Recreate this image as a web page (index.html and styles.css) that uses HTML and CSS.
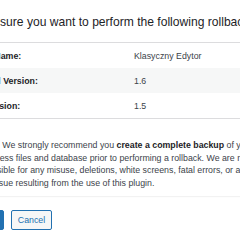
FILE: index.html
```html
<!DOCTYPE html>
<html lang="en">
<head>
    <meta charset="UTF-8">
    <title>Rollback</title>
    <link rel="stylesheet" href="styles.css">
</head>
<body>
    <div class="modal">
        <h3 class="modal-title">Are you sure you want to perform the following rollback?</h3>

        <table class="rollback-table">
            <tr>
                <td class="label">Plugin Name:</td>
                <td class="value">Klasyczny Edytor</td>
            </tr>
            <tr class="alt">
                <td class="label">Installed Version:</td>
                <td class="value">1.6</td>
            </tr>
            <tr>
                <td class="label">New Version:</td>
                <td class="value">1.5</td>
            </tr>
        </table>

        <div class="notice">
            <p><strong>Notice:</strong> We strongly recommend you <strong>create a complete backup</strong> of your WordPress files and database prior to performing a rollback. We are not responsible for any misuse, deletions, white screens, fatal errors, or any other issue resulting from the use of this plugin.</p>
        </div>

        <div class="actions">
            <button class="btn btn-primary">Rollback</button>
            <button class="btn btn-secondary">Cancel</button>
        </div>
    </div>
</body>
</html>
```

FILE: styles.css
```css
body {
    margin: 0;
    background: #fff;
    font-family: "Liberation Sans", Arial, sans-serif;
    color: #1d2327;
    overflow: hidden;
}

.modal {
    margin-left: -46px;
    width: 380px;
}

.modal-title {
    margin: 0;
    padding: 15px 0 0 1px;
    font-size: 12.1px;
    line-height: 14px;
    font-weight: normal;
    white-space: nowrap;
}

.rollback-table {
    margin-top: 13px;
    width: 100%;
    border-collapse: collapse;
    border-top: 1px solid #dcdcde;
    border-bottom: 1px solid #dcdcde;
    font-size: 8.8px;
}

.rollback-table td {
    height: 25px;
    padding: 0 0 0 11px;
    vertical-align: middle;
}

.rollback-table .label {
    width: 162px;
    font-weight: bold;
    color: #1d2327;
}

.rollback-table .value {
    padding-left: 7px;
    color: #3c434a;
}

.rollback-table .alt td {
    background: #f6f7f7;
}

.notice {
    margin-top: 12px;
    padding: 0 0 0 16px;
    background: #fff;
    box-shadow: 0 1px 1px rgba(0,0,0,0.05);
}

.notice p {
    margin: 0;
    padding: 8px 0 6px;
    font-size: 8.8px;
    line-height: 12.7px;
    color: #3c434a;
    width: 290px;
}

.notice strong {
    font-weight: bold;
    color: #1d2327;
}

.actions {
    margin-top: 14px;
    display: flex;
    gap: 7px;
}

.btn {
    height: 20px;
    padding: 0 4px;
    border-radius: 2px;
    font-family: inherit;
    font-size: 8.8px;
    cursor: pointer;
}

.btn-primary {
    width: 50px;
    background: #2271b1;
    border: 1px solid #2271b1;
    color: #fff;
}

.btn-secondary {
    width: 41px;
    background: #f6f7f7;
    border: 1px solid #2271b1;
    color: #2271b1;
}
```
